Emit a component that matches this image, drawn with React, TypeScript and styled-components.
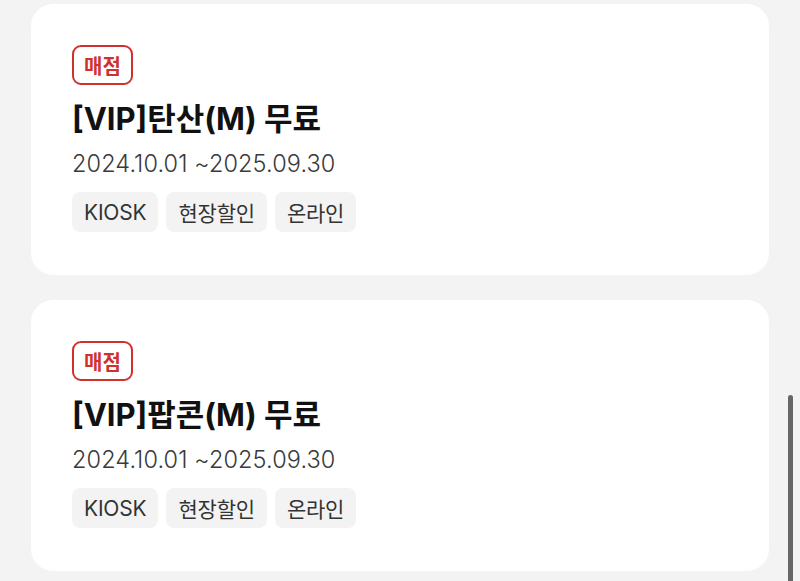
import React from "react";
import styled, { createGlobalStyle } from "styled-components";

const Global = createGlobalStyle`
  html, body { margin: 0; padding: 0; background: #f3f3f3; }
  body { font-family: Inter, "Noto Sans CJK KR", sans-serif; overflow: hidden; }
  * { box-sizing: border-box; }
`;

const Page = styled.div`
  display: flex;
  flex-direction: column;
  gap: 25px;
  padding: 4px 31px 0 31px;
  width: 800px;
  height: 581px;
  overflow: hidden;
`;

const Card = styled.div`
  background: #ffffff;
  border-radius: 22px;
  padding: 41px;
  display: flex;
  flex-direction: column;
  align-items: flex-start;
  height: 271px;
`;

const Badge = styled.span`
  display: inline-flex;
  align-items: center;
  justify-content: center;
  height: 40px;
  padding: 0 10px;
  border: 2px solid #d0312d;
  border-radius: 9px;
  color: #d0312d;
  font-weight: 700;
  font-size: 20px;
  font-family: "Noto Sans CJK KR", sans-serif;
`;

const Title = styled.h2`
  margin: 14px 0 0 0;
  font-size: 31px;
  line-height: 40px;
  font-weight: 700;
  color: #111;
`;

const Period = styled.div`
  margin-top: 10px;
  font-size: 23.5px;
  line-height: 30px;
  color: #3a3a3a;
  font-weight: 300;
  letter-spacing: 0.1px;
`;

const Tags = styled.div`
  display: flex;
  gap: 8px;
  margin-top: 13px;
`;

const Tag = styled.span`
  display: inline-flex;
  align-items: center;
  height: 40px;
  padding: 0 12px;
  background: #f3f3f3;
  border-radius: 8px;
  font-size: 21px;
  color: #333;
  letter-spacing: -0.2px;
`;

const Scrollbar = styled.div`
  position: fixed;
  left: 788px;
  top: 395px;
  width: 5px;
  height: 200px;
  border-radius: 3px;
  background: #666;
`;

const coupons = [
  { title: "[VIP]탄산(M) 무료" },
  { title: "[VIP]팝콘(M) 무료" },
];

export default function App() {
  return (
    <>
      <Global />
      <Page>
        {coupons.map((c) => (
          <Card key={c.title}>
            <Badge>매점</Badge>
            <Title>{c.title}</Title>
            <Period>2024.10.01 ~2025.09.30</Period>
            <Tags>
              <Tag>KIOSK</Tag>
              <Tag>현장할인</Tag>
              <Tag>온라인</Tag>
            </Tags>
          </Card>
        ))}
      </Page>
      <Scrollbar />
    </>
  );
}
